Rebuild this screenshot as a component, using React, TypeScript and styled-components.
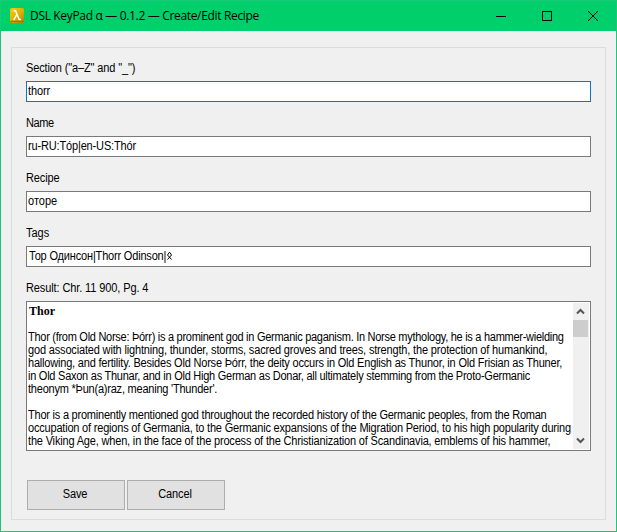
import React from "react";
import styled, { createGlobalStyle } from "styled-components";

const GlobalStyle = createGlobalStyle`
  *, *::before, *::after { box-sizing: border-box; }
  body { margin: 0; background: #f0f0f0; overflow: hidden; }
`;

const Window = styled.main`
  display: flex;
  flex-direction: column;
  width: 617px;
  height: 532px;
  border: 1px solid #1bc878;
  background: #f0f0f0;
  color: #000;
  font: 12px/13px "Liberation Sans", Arial, sans-serif;
`;

const TitleBar = styled.header`
  display: flex;
  align-items: center;
  flex: none;
  height: 30px;
  padding-left: 8px;
  background: #00cf6b;
`;

const Title = styled.h1`
  flex: 1;
  margin: 0 0 0 5px;
  font: 12px/16px "Open Sans", "Noto Sans", sans-serif;
  letter-spacing: -0.33px;
  white-space: nowrap;
`;

const WindowButton = styled.button`
  display: flex;
  align-items: center;
  justify-content: center;
  width: 46px;
  height: 30px;
  padding: 0;
  border: 0;
  background: none;
`;

const Group = styled.section`
  display: flex;
  flex-direction: column;
  flex: none;
  width: 595px;
  height: 473px;
  margin: 16px 0 0 10px;
  padding: 14px 14px 0;
  border: 1px solid #dcdcdc;
`;

const Field = styled.div`
  display: flex;
  flex-direction: column;
  gap: 6px;
  height: 55px;
`;

/* Condensed run of text; the tracking is tuned per string. */
const Text = styled.span<{ $track?: number; $center?: boolean }>`
  display: block;
  height: 13px;
  letter-spacing: ${(p) => p.$track ?? 0}px;
  white-space: pre;
  transform: scaleX(0.917);
  transform-origin: ${(p) => (p.$center ? "center" : "left")};
`;

const Entry = styled.div<{ $focused?: boolean; $indent?: number }>`
  display: flex;
  align-items: center;
  flex: none;
  width: 565px;
  height: 21px;
  padding: 0 2px 1px ${(p) => p.$indent ?? 1}px;
  border: 1px solid ${(p) => (p.$focused ? "#0078d7" : "#7a7a7a")};
  background: #fff;
`;

const Result = styled.div`
  display: flex;
  flex: none;
  width: 565px;
  height: 150px;
  margin-top: 6px;
  border: 1px solid #7a7a7a;
  background: #fff;
`;

const ResultText = styled.div`
  flex: 1;
  min-width: 0;
  padding: 3px 0 0 1px;
`;

const Heading = styled.div`
  height: 13px;
  padding-left: 1px;
  font: bold 12px/13px "Liberation Serif", serif;
`;

const ScrollBar = styled.div`
  display: flex;
  flex-direction: column;
  width: 17px;
  margin: 1px 0;
  border-right: 1px solid #fff;
  background: #f0f0f0;
`;

const Arrow = styled.span`
  display: flex;
  align-items: center;
  justify-content: center;
  height: 17px;
  padding-right: 1px;
`;

const Thumb = styled.span`
  height: 17px;
  margin-right: 1px;
  margin-bottom: auto;
  background: #cdcdcd;
`;

const Actions = styled.footer`
  display: flex;
  gap: 2px;
  margin: 29px 0 0 1px;
`;

const Button = styled.button`
  width: 98px;
  height: 30px;
  padding: 0 2px 1px 0;
  border: 1px solid #adadad;
  background: #e1e1e1;
  color: #000;
  font: inherit;
`;

const lines: [string, number][] = [
  ["", 0],
  ["Thor (from Old Norse: Þórr) is a prominent god in Germanic paganism. In Norse mythology, he is a hammer-wielding", -0.303],
  ["god associated with lightning, thunder, storms, sacred groves and trees, strength, the protection of humankind,", -0.18],
  ["hallowing, and fertility. Besides Old Norse Þórr, the deity occurs in Old English as Thunor, in Old Frisian as Thuner,", -0.213],
  ["in Old Saxon as Thunar, and in Old High German as Donar, all ultimately stemming from the Proto-Germanic", -0.275],
  ["theonym *Þun(a)raz, meaning 'Thunder'.", -0.24],
  ["", 0],
  ["Thor is a prominently mentioned god throughout the recorded history of the Germanic peoples, from the Roman", -0.245],
  ["occupation of regions of Germania, to the Germanic expansions of the Migration Period, to his high popularity during", -0.215],
  ["the Viking Age, when, in the face of the process of the Christianization of Scandinavia, emblems of his hammer,", -0.19],
];

const AppIcon = () => (
  <svg width="16" height="16" viewBox="0 0 16 16">
    <defs>
      <linearGradient id="gold" x1="0" y1="0" x2="1" y2="1">
        <stop offset="0" stopColor="#f2c91c" />
        <stop offset=".55" stopColor="#deb000" />
        <stop offset="1" stopColor="#a97c14" />
      </linearGradient>
    </defs>
    <rect x="1" y="0" width="14" height="15" rx="2" fill="url(#gold)" />
    <path d="M1.5 13.5H14.5" stroke="#9a7620" strokeWidth="1.5" />
    <path d="M4.5 2.8H6.5L10.2 11.5H12M7.8 6.5L4.8 12" fill="none" stroke="#fff" strokeWidth="1.5" />
  </svg>
);

const Rune = () => (
  <svg width="7" height="12" viewBox="0 0 7 12">
    <path d="M1.5 9.5L5.5 5L3.5 2.2L1.5 5L5.5 9.5" fill="none" stroke="#000" strokeWidth="1" />
  </svg>
);

const Chevron = ({ down = false }: { down?: boolean }) => (
  <svg width="9" height="7" viewBox="0 0 9 7">
    <path d={down ? "M1 1.5L4.5 5L8 1.5" : "M1 5.5L4.5 2L8 5.5"} fill="none" stroke="#555" strokeWidth="2" />
  </svg>
);

const RunePlace = styled.span`
  display: flex;
  margin-left: -13px;
`;

export default function App() {
  return (
    <>
      <GlobalStyle />
      <Window>
        <TitleBar>
          <AppIcon />
          <Title>DSL KeyPad α — 0.1.2 — Create/Edit Recipe</Title>
          <WindowButton aria-label="Minimize">
            <svg width="10" height="10"><path d="M0 5.5H10" stroke="#000" /></svg>
          </WindowButton>
          <WindowButton aria-label="Maximize">
            <svg width="10" height="10"><rect x=".5" y=".5" width="9" height="9" fill="none" stroke="#000" /></svg>
          </WindowButton>
          <WindowButton aria-label="Close">
            <svg width="10" height="10"><path d="M0 0L10 10M10 0L0 10" stroke="#000" /></svg>
          </WindowButton>
        </TitleBar>
        <Group>
          <Field>
            <Text $track={-0.14}>{'Section ("a–Z" and "_")'}</Text>
            <Entry $focused><Text $track={-0.1}>thorr</Text></Entry>
          </Field>
          <Field>
            <Text $track={-0.45}>Name</Text>
            <Entry><Text $track={-0.17}>ru-RU:Tóp|en-US:Thór</Text></Entry>
          </Field>
          <Field>
            <Text $track={-0.16}>Recipe</Text>
            <Entry><Text>оторе</Text></Entry>
          </Field>
          <Field>
            <Text>Tags</Text>
            <Entry $indent={2}>
              <Text $track={-0.2}>Тор Одинсон|Thorr Odinson|</Text>
              <RunePlace><Rune /></RunePlace>
            </Entry>
          </Field>
          <Text $track={-0.12}>Result: Chr. 11 900, Pg. 4</Text>
          <Result>
            <ResultText>
              <Heading>Thor</Heading>
              {lines.map(([text, track], i) => (
                <Text key={i} $track={track}>{text}</Text>
              ))}
            </ResultText>
            <ScrollBar>
              <Arrow><Chevron /></Arrow>
              <Thumb />
              <Arrow><Chevron down /></Arrow>
            </ScrollBar>
          </Result>
          <Actions>
            <Button><Text $center $track={-0.1}>Save</Text></Button>
            <Button><Text $center $track={-0.1}>Cancel</Text></Button>
          </Actions>
        </Group>
      </Window>
    </>
  );
}
